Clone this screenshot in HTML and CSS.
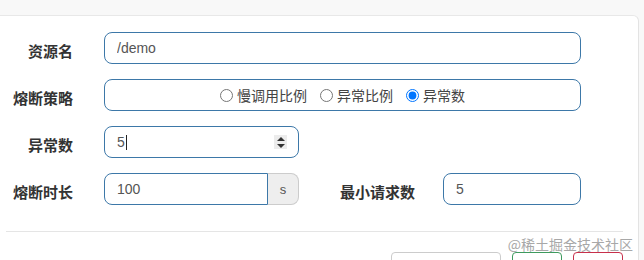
FILE: index.html
```html
<!DOCTYPE html>
<html lang="zh-CN">
<head>
    <meta charset="UTF-8">
    <title>熔断规则</title>
    <link rel="stylesheet" href="styles.css">
</head>
<body>
    <div class="panel">
        <div class="form">
            <div class="row">
                <label class="label">资源名</label>
                <input type="text" class="input grow" value="/demo">
            </div>
            <div class="row">
                <label class="label">熔断策略</label>
                <div class="input grow radios">
                    <label class="radio"><input type="radio" name="grade"> 慢调用比例</label>
                    <label class="radio"><input type="radio" name="grade"> 异常比例</label>
                    <label class="radio"><input type="radio" name="grade" checked> 异常数</label>
                </div>
            </div>
            <div class="row">
                <label class="label">异常数</label>
                <div class="input number">
                    <span class="value">5</span><span class="caret"></span>
                    <span class="spinner">
                        <svg width="8" height="11" viewBox="0 0 8 11"><path d="M4 0 L8 4 L0 4 Z M0 7 L8 7 L4 11 Z" fill="#333"/></svg>
                    </span>
                </div>
            </div>
            <div class="row">
                <label class="label">熔断时长</label>
                <div class="group">
                    <input type="text" class="input left" value="100">
                    <span class="addon">s</span>
                </div>
                <label class="label wide">最小请求数</label>
                <input type="text" class="input grow" value="5">
            </div>
        </div>

        <!-- footer buttons -->
        <div class="footer">
            <button class="btn btn-default"></button>
            <button class="btn btn-success"></button>
            <button class="btn btn-danger"></button>
        </div>
        <span class="watermark">@稀土掘金技术社区</span>
    </div>
</body>
</html>
```

FILE: styles.css
```css
* { margin: 0; padding: 0; box-sizing: border-box; }
body {
    font-family: "Liberation Sans", "Noto Sans CJK SC", sans-serif;
    background-color: #f8f8f8;
    width: 644px;
    height: 260px;
    overflow: hidden;
}
.panel {
    position: relative;
    margin-top: 15px;
    width: 639px;
    height: 245px;
    overflow: hidden;
    background-color: #ffffff;
    border-top: 1px solid #e8e8e8;
    border-right: 1px solid #e3e3e3;
    border-top-right-radius: 6px;
    padding-top: 16px;
}
.form {
    width: 581px;
}
.row {
    display: flex;
    align-items: center;
    height: 32px;
    margin-bottom: 15px;
}
.label {
    width: 73px;
    margin-right: 31px;
    padding-top: 5px;
    text-align: right;
    font-size: 15px;
    font-weight: bold;
    color: #333;
}
.label.wide {
    width: 116px;
    margin-right: 28px;
}
.input {
    height: 32px;
    padding: 0 12px;
    border: 1px solid #3d78a8;
    border-radius: 8px;
    font-family: inherit;
    font-size: 14px;
    color: #555;
    background-color: #fff;
    outline: none;
}
.grow {
    flex: 1;
    min-width: 0;
}
.radios {
    display: flex;
    justify-content: center;
    align-items: center;
    gap: 13px;
    font-size: 14px;
    color: #444;
}
.radio {
    display: flex;
    align-items: center;
    gap: 4px;
}
.radio input {
    width: 13px;
    height: 13px;
    margin: 1px 0 0 0;
}
.number {
    width: 195px;
    display: flex;
    align-items: center;
}
.caret {
    width: 1px;
    height: 15px;
    margin-left: 1px;
    background-color: #222;
}
.spinner {
    margin-left: auto;
    margin-right: -1px;
    width: 13px;
    height: 14px;
    background-color: #ececec;
    display: flex;
    align-items: center;
    justify-content: center;
}
.group {
    display: flex;
    width: 195px;
    height: 32px;
}
.group .left {
    width: 164px;
    border-radius: 8px 0 0 8px;
}
.addon {
    width: 31px;
    display: flex;
    align-items: center;
    justify-content: center;
    background-color: #eeeeee;
    border: 1px solid #cccccc;
    border-left: none;
    border-radius: 0 8px 8px 0;
    font-size: 13px;
    color: #555;
}
.footer {
    margin: 26px 15px 0 6px;
    padding-top: 20px;
    border-top: 1px solid #e5e5e5;
    display: flex;
    justify-content: flex-end;
    gap: 11px;
}
.btn {
    flex-shrink: 0;
    height: 34px;
    width: 50px;
    background-color: #fff;
    border-radius: 4px;
    border: 1px solid #ccc;
}
.btn-default {
    width: 110px;
}
.btn-success {
    border-color: #3e9a5e;
}
.btn-danger {
    border-color: #c7304b;
}
.watermark {
    position: absolute;
    right: 5px;
    top: 218px;
    font-size: 14px;
    color: #a8a8a8;
    font-family: "Noto Sans CJK SC", sans-serif;
}
```
